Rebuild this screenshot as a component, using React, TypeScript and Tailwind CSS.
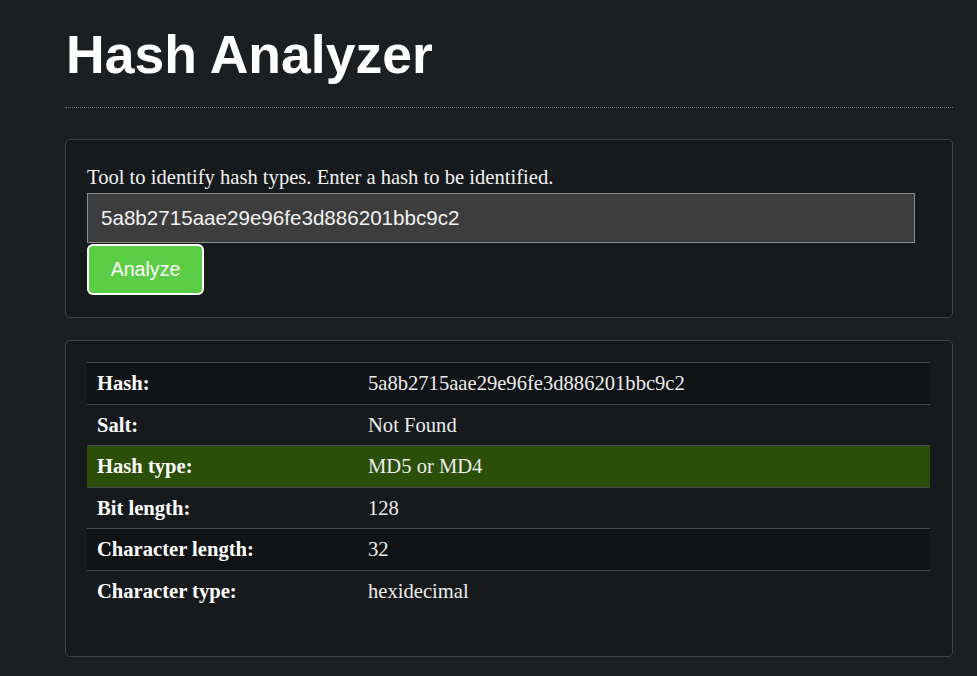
export default function App() {
  const rows = [
    { label: 'Hash:', value: '5a8b2715aae29e96fe3d886201bbc9c2' },
    { label: 'Salt:', value: 'Not Found' },
    { label: 'Hash type:', value: 'MD5 or MD4', highlight: true },
    { label: 'Bit length:', value: '128' },
    { label: 'Character length:', value: '32' },
    { label: 'Character type:', value: 'hexidecimal' },
  ]

  return (
    <div className="min-h-[676px] bg-[#1c1f22] pt-[20px] pb-[20px]" style={{ fontFamily: '"Liberation Serif", serif' }}>
      <div className="ml-[65px] w-[888px]">
        <h1 className="text-[53.5px] leading-[70px] font-bold text-white pl-[1px]" style={{ fontFamily: '"Liberation Sans", Arial, sans-serif' }}>
          Hash Analyzer
        </h1>
        <div className="mt-[17px] border-b border-dotted border-[#6b7075]" />

        {/* Input panel */}
        <div className="mt-[31px] rounded-[5px] border border-[#3f4448] bg-[#171a1d] px-[21px] pt-[21px] pb-[22px]">
          <p className="text-[20.6px] leading-[32px] text-[#f2f2f2]">
            Tool to identify hash types. Enter a hash to be identified.
          </p>
          <input
            type="text"
            defaultValue="5a8b2715aae29e96fe3d886201bbc9c2"
            className="block h-[50px] w-[828px] border border-[#8c8c8c] bg-[#3d3d3d] px-[13px] text-[20.6px] text-[#f2f2f2] outline-none"
            style={{ fontFamily: '"Liberation Sans", Arial, sans-serif' }}
          />
          <button
            className="mt-[1px] block h-[51px] w-[117px] rounded-[6px] border-2 border-white bg-[#5bcd45] text-[19.6px] text-white"
            style={{ fontFamily: '"Liberation Sans", Arial, sans-serif' }}
          >
            Analyze
          </button>
        </div>

        {/* Results panel */}
        <div className="mt-[22px] rounded-[5px] border border-[#3f4448] bg-[#171a1d] px-[21px] pt-[21px] pb-[45px]">
          <div className="w-[843px] border-t border-[#44494e]">
            {rows.map((row, i) => (
              <div
                key={row.label}
                className={
                  'grid grid-cols-[271px_1fr] ' +
                  (i < rows.length - 1 ? 'border-b border-[#44494e] ' : '') +
                  (row.highlight ? 'bg-[#2b4e09]' : i % 2 === 0 ? 'bg-[#111417]' : 'bg-[#171a1d]')
                }
              >
                <div className="px-[10px] py-[8px] text-[20.6px] leading-[24.5px] font-bold text-white">{row.label}</div>
                <div className="px-[10px] py-[8px] text-[20.6px] leading-[24.5px] text-[#ececec]">{row.value}</div>
              </div>
            ))}
          </div>
        </div>
      </div>
    </div>
  )
}
